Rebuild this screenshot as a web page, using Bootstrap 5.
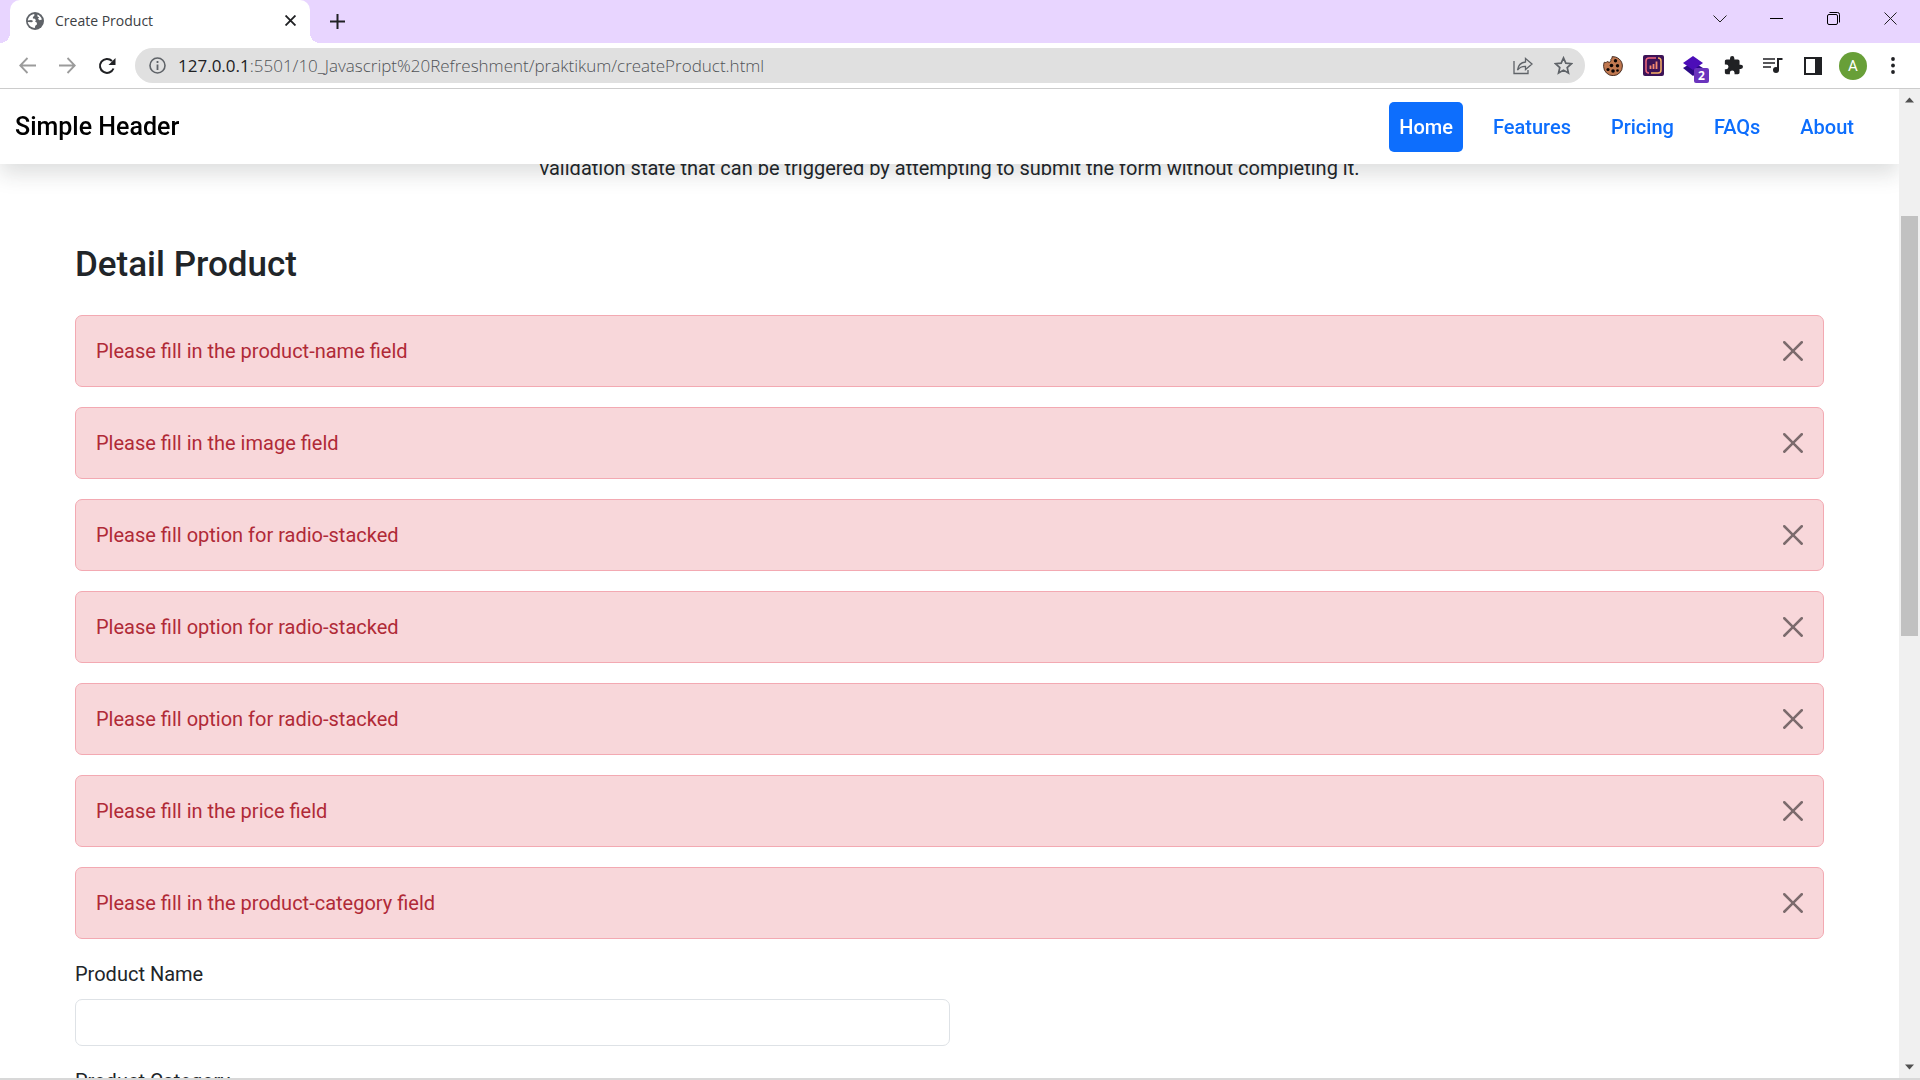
<!DOCTYPE html>
<html lang="en">
<head>
<meta charset="utf-8">
<meta name="viewport" content="width=device-width, initial-scale=1">
<title>Create Product</title>
<link href="https://cdn.jsdelivr.net/npm/bootstrap@5.3.0/dist/css/bootstrap.min.css" rel="stylesheet">
<style>
html { font-size: 20px; }
body { font-family: Roboto, "Liberation Sans", sans-serif; font-size: 20px; line-height: 30px; background: #fff; }
svg { display: block; flex: none; }
.icon-btn { border: 0; padding: 0; background: none; color: #202124; display: flex; align-items: center; justify-content: center; width: 40px; height: 35px; flex: none; position: relative; }
.tab-strip { background: #e8d5ff; height: 43px; padding: 0 1px 0 10px; }
.browser-tab { position: relative; width: 300px; height: 43px; background: #fff; border-radius: 10px 10px 0 0; padding: 0 13px 2px 16px; font: 15px/20px "Open Sans", sans-serif; color: #3c4043; }
.browser-tab::before, .browser-tab::after { content: ""; position: absolute; bottom: 0; width: 10px; height: 10px; }
.browser-tab::before { left: -10px; background: radial-gradient(circle at 0 0, transparent 10px, #fff 10px); }
.browser-tab::after { right: -10px; background: radial-gradient(circle at 100% 0, transparent 10px, #fff 10px); }
.tab-name { margin-left: 11px; font-size: 14px; }
.tab-close { width: 14px; height: 20px; }
.new-tab { height: 43px; margin-left: 7px; }
.win-btn { width: 57px; height: 37px; }
.toolbar-row { height: 46px; padding: 0 7px; border-bottom: 1px solid #ccc; background: #fff; }
.nav-keys { width: 128px; }
.address { background: #e0e0e0; border-radius: 18px; height: 35px; padding: 0 2px 0 14px; }
.address-text { font: 300 17px/24px "Open Sans", sans-serif; color: #505357; margin-left: 12px; }
.address-text b { font-weight: 400; color: #202124; }
.extras { padding-left: 8px; }
.ext-badge { position: absolute; left: 21px; top: 20px; width: 15px; height: 15px; border-radius: 2px; background: #6b35bd; color: #fff; font: 700 12px/15px "Open Sans", sans-serif; text-align: center; }
.avatar-dot { width: 28px; height: 28px; border-radius: 50%; background: #689f38; color: #fff; font-size: 15px; line-height: 28px; }
.site-header { background: #fff; height: 75px; padding: 0 25px 0 15px; z-index: 2; }
.site-title { font-size: 25px; font-weight: 500; color: #000; }
.site-nav .nav-link { padding: 10px; margin: 0 10px; font-weight: 500; border-radius: 5px; color: #0d6efd; }
.site-nav .nav-link.active { background: #0d6efd; color: #fff; }
.intro { margin: -11px 0 61px; }
.page-body { padding: 0 75px; }
.page-body h3 { font-size: 35px; line-height: 42px; margin: 0 0 29px; }
.alert-danger { background: #f8d7da; border-color: #f3a9b2; color: #b02a37; padding: 20px; margin-bottom: 20px; border-radius: 7px; }
.alert-dismissible .btn-close { padding: 25px 20px; box-sizing: content-box; width: 20px; height: 20px; background-size: 20px; }
.form-label { margin-bottom: 10px; }
.form-control { font-size: 20px; padding: 7px 15px 8px; border-radius: 7px; height: 47px; border-color: #dee2e6; }
.scroll-rail { width: 21px; background: #f0f0f0; padding: 8px 2px; }
.scroll-thumb { background: #c1c1c1; height: 420px; margin-top: 113px; }
.taskbar-edge { height: 2px; background: #d8d8d8; }
</style>
</head>
<body class="vh-100 overflow-hidden d-flex flex-column">
<div class="tab-strip d-flex align-items-start flex-shrink-0">
  <div class="browser-tab d-flex align-items-center">
    <svg width="18" height="18" viewBox="0 0 18 18"><circle cx="9" cy="9" r="9" fill="#5f6368"/><path d="M1.800 8.500C2.300 5 5 2.300 8.300 2v1.800L6.900 5v1.500l2 .3 1 1.400-.8 1.300 1.800 1.200v1.800l-1.600 1.200L8.800 16C5 15.800 2.100 12.800 1.800 10l4 .2L7.200 9l-2-1z" fill="#fff"/><path d="M11.500 2.500c2 .8 3.800 2.700 4.400 4.900l-2.300.9-1.700-1.500 1.300-1.300-1.900-1.300z" fill="#fff"/></svg>
    <span class="tab-name me-auto">Create Product</span>
    <button class="icon-btn tab-close" aria-label="Close tab"><svg width="11" height="11" viewBox="0 0 10 10"><path d="M.5.5l9 9M9.500.5l-9 9" stroke="#202124" stroke-width="1.700"/></svg></button>
  </div>
  <button class="icon-btn new-tab me-auto" aria-label="New tab"><svg width="15" height="15" viewBox="0 0 15 15"><path d="M7.500 0v15M0 7.500h15" stroke="#202124" stroke-width="2"/></svg></button>
  <button class="icon-btn win-btn" aria-label="Search tabs"><svg width="14" height="8" viewBox="0 0 14 8"><path d="M.5.5L7 7l6.500-6.500" fill="none" stroke="#222"/></svg></button>
  <button class="icon-btn win-btn" aria-label="Minimize"><svg width="13" height="1"><path d="M0 .5h13" stroke="#000"/></svg></button>
  <button class="icon-btn win-btn" aria-label="Restore"><svg width="13" height="13" viewBox="0 0 13 13"><g fill="none" stroke="#000"><rect x=".5" y="2.500" width="10" height="10" rx="1.500"/><path d="M2.500.500h8a2 2 0 0 1 2 2v8"/></g></svg></button>
  <button class="icon-btn win-btn" aria-label="Close"><svg width="13" height="13" viewBox="0 0 13 13"><path d="M.5.5l12 12M12.500.5l-12 12" stroke="#222"/></svg></button>
</div>

<div class="toolbar-row d-flex align-items-center flex-shrink-0">
  <div class="nav-keys d-flex">
    <button class="icon-btn" aria-label="Back"><svg width="17" height="17" viewBox="0 0 17 17"><path d="M17 8.500H1.500M8.500 1L1.200 8.500 8.500 16" fill="none" stroke="#9b9b9b" stroke-width="1.800"/></svg></button>
    <button class="icon-btn" aria-label="Forward"><svg width="17" height="17" viewBox="0 0 17 17"><path d="M0 8.500h15.500M8.500 1l7.300 7.500L8.500 16" fill="none" stroke="#9b9b9b" stroke-width="1.800"/></svg></button>
    <button class="icon-btn" aria-label="Reload"><svg width="18" height="18" viewBox="0 0 18 18"><path d="M15.500 11.500A7 7 0 1 1 14 4" fill="none" stroke="#202124" stroke-width="2"/><path d="M17.500 1v7h-7z" fill="#202124"/></svg></button>
  </div>
  <div class="address d-flex align-items-center flex-grow-1">
    <svg width="17" height="17" viewBox="0 0 17 17"><circle cx="8.500" cy="8.500" r="7.500" fill="none" stroke="#5f6368" stroke-width="1.600"/><path d="M8.500 7.500V13M8.500 4v2" stroke="#5f6368" stroke-width="1.800"/></svg>
    <span class="address-text me-auto"><b>127.0.0.1</b>:5501/10_Javascript%20Refreshment/praktikum/createProduct.html</span>
    <button class="icon-btn" aria-label="Share"><svg width="20" height="18" viewBox="0 0 20 18"><g fill="none" stroke="#5f6368" stroke-width="1.300"><path d="M1 4v12.500h14V13"/><path d="M12.500 1.500L19 7l-6.500 5.500V9.300C9 9.200 6.500 10.300 4.500 13c.6-4.500 3.300-7.500 8-8z"/></g></svg></button>
    <button class="icon-btn" aria-label="Bookmark"><svg width="19" height="19" viewBox="0 0 18 18"><path d="M9 1.800l2.200 5 5.400.5-4.100 3.600 1.200 5.300L9 13.400l-4.700 2.800 1.200-5.300L1.400 7.300l5.400-.5z" fill="none" stroke="#5f6368" stroke-width="1.600"/></svg></button>
  </div>
  <div class="extras d-flex">
    <button class="icon-btn" aria-label="Cookies"><svg width="20" height="20" viewBox="0 0 20 20"><path d="M9 .7C14.500.2 19.400 4.500 19.400 10a9.400 9.400 0 0 1-18.800.5C.5 9 .7 7.500 1.300 6.200c1.200.6 2.300.3 2.900-.6l2 .7c1.600-.3 2-1.500 1.500-2.700C8.700 3 9.200 1.800 9 .7z" fill="#c07850" stroke="#3a2016" stroke-width=".9"/><g fill="#0c0504"><circle cx="12.500" cy="4.800" r="1.700"/><circle cx="8.500" cy="9.500" r="1.800"/><circle cx="14.500" cy="9.700" r="1.700"/><circle cx="5" cy="13.500" r="1.600"/><circle cx="10" cy="15" r="1.800"/><circle cx="14.500" cy="14.500" r="1.300"/></g></svg></button>
    <button class="icon-btn" aria-label="Analytics"><svg width="21" height="21" viewBox="0 0 21 21"><rect width="21" height="21" rx="2" fill="#3c1357"/><path d="M13 3H6a3 3 0 0 0-3 3v9a3 3 0 0 0 3 3" fill="none" stroke="#f0687c" stroke-width="1.500"/><path d="M15 3a3 3 0 0 1 3 3v9a3 3 0 0 1-3 3H8" fill="none" stroke="#f7b267" stroke-width="1.500"/><path d="M7.500 14v-3.500M10.500 14V9M13.500 14V6.500" stroke="#f58a70" stroke-width="1.800"/></svg></button>
    <button class="icon-btn" aria-label="Layers, 2"><svg width="20" height="20" viewBox="0 0 20 20"><path d="M0 12l10-6 10 6-10 8z" fill="#2c0a86"/><path d="M0 7l10-7 10 7-10 7z" fill="#4c0db8"/></svg><span class="ext-badge">2</span></button>
    <button class="icon-btn" aria-label="Extensions"><svg width="19" height="19" viewBox="1 1 22 22"><path fill="#202124" d="M20.500 11H19V7c0-1.100-.9-2-2-2h-4V3.500a2.500 2.500 0 0 0-5 0V5H4c-1.100 0-2 .9-2 2v3.800h1.500a2.700 2.700 0 0 1 0 5.400H2V20c0 1.100.9 2 2 2h3.800v-1.500a2.700 2.700 0 0 1 5.400 0V22H17c1.100 0 2-.9 2-2v-4h1.500a2.500 2.500 0 0 0 0-5z"/></svg></button>
    <button class="icon-btn" aria-label="Media"><svg width="20" height="17" viewBox="0 0 20 17"><path d="M0 2h12M0 6h12M0 10h8" stroke="#202124" stroke-width="1.600"/><path d="M15 13V2h4.500" fill="none" stroke="#202124" stroke-width="2"/><circle cx="13" cy="13" r="3" fill="#202124"/></svg></button>
    <button class="icon-btn" aria-label="Side panel"><svg width="18" height="18" viewBox="0 0 18 18"><rect x="1" y="1" width="16" height="16" fill="#fff" stroke="#202124" stroke-width="2"/><path d="M11 1h6v16h-6z" fill="#202124"/></svg></button>
    <button class="icon-btn" aria-label="Profile"><span class="avatar-dot">A</span></button>
    <button class="icon-btn" aria-label="Menu"><svg width="4" height="17" viewBox="0 0 4 17"><g fill="#202124"><circle cx="2" cy="2" r="1.900"/><circle cx="2" cy="8.500" r="1.900"/><circle cx="2" cy="15" r="1.900"/></g></svg></button>
  </div>
</div>

<div class="d-flex flex-grow-1 overflow-hidden">
  <div class="flex-grow-1 overflow-hidden">
    <header class="site-header sticky-top shadow d-flex align-items-center justify-content-between">
      <a href="#" class="site-title text-decoration-none">Simple Header</a>
      <ul class="site-nav nav">
        <li class="nav-item"><a href="#" class="nav-link active" aria-current="page">Home</a></li>
        <li class="nav-item"><a href="#" class="nav-link">Features</a></li>
        <li class="nav-item"><a href="#" class="nav-link">Pricing</a></li>
        <li class="nav-item"><a href="#" class="nav-link">FAQs</a></li>
        <li class="nav-item"><a href="#" class="nav-link">About</a></li>
      </ul>
    </header>
    <main class="page-body">
      <p class="intro text-center">validation state that can be triggered by attempting to submit the form without completing it.</p>
      <h3>Detail Product</h3>
      <div class="alert alert-danger alert-dismissible" role="alert">Please fill in the product-name field<button type="button" class="btn-close" data-bs-dismiss="alert" aria-label="Close"></button></div>
      <div class="alert alert-danger alert-dismissible" role="alert">Please fill in the image field<button type="button" class="btn-close" data-bs-dismiss="alert" aria-label="Close"></button></div>
      <div class="alert alert-danger alert-dismissible" role="alert">Please fill option for radio-stacked<button type="button" class="btn-close" data-bs-dismiss="alert" aria-label="Close"></button></div>
      <div class="alert alert-danger alert-dismissible" role="alert">Please fill option for radio-stacked<button type="button" class="btn-close" data-bs-dismiss="alert" aria-label="Close"></button></div>
      <div class="alert alert-danger alert-dismissible" role="alert">Please fill option for radio-stacked<button type="button" class="btn-close" data-bs-dismiss="alert" aria-label="Close"></button></div>
      <div class="alert alert-danger alert-dismissible" role="alert">Please fill in the price field<button type="button" class="btn-close" data-bs-dismiss="alert" aria-label="Close"></button></div>
      <div class="alert alert-danger alert-dismissible" role="alert">Please fill in the product-category field<button type="button" class="btn-close" data-bs-dismiss="alert" aria-label="Close"></button></div>
      <form>
        <div class="w-50 mb-3">
          <label for="product-name" class="form-label d-block">Product Name</label>
          <input type="text" class="form-control" id="product-name">
        </div>
        <div class="w-50">
          <label for="product-category" class="form-label d-block">Product Category</label>
          <select class="form-control" id="product-category"><option>Choose...</option></select>
        </div>
      </form>
    </main>
  </div>
  <div class="scroll-rail d-flex flex-column align-items-stretch flex-shrink-0">
    <svg class="align-self-center" width="9" height="6" viewBox="0 0 9 6"><path d="M0 5.500L4.500.5 9 5.500z" fill="#505050"/></svg>
    <div class="scroll-thumb"></div>
    <svg class="align-self-center mt-auto" width="9" height="6" viewBox="0 0 9 6"><path d="M0 .5h9l-4.500 5z" fill="#505050"/></svg>
  </div>
</div>
<div class="taskbar-edge flex-shrink-0"></div>
<script src="https://cdn.jsdelivr.net/npm/bootstrap@5.3.0/dist/js/bootstrap.bundle.min.js"></script>
</body>
</html>
